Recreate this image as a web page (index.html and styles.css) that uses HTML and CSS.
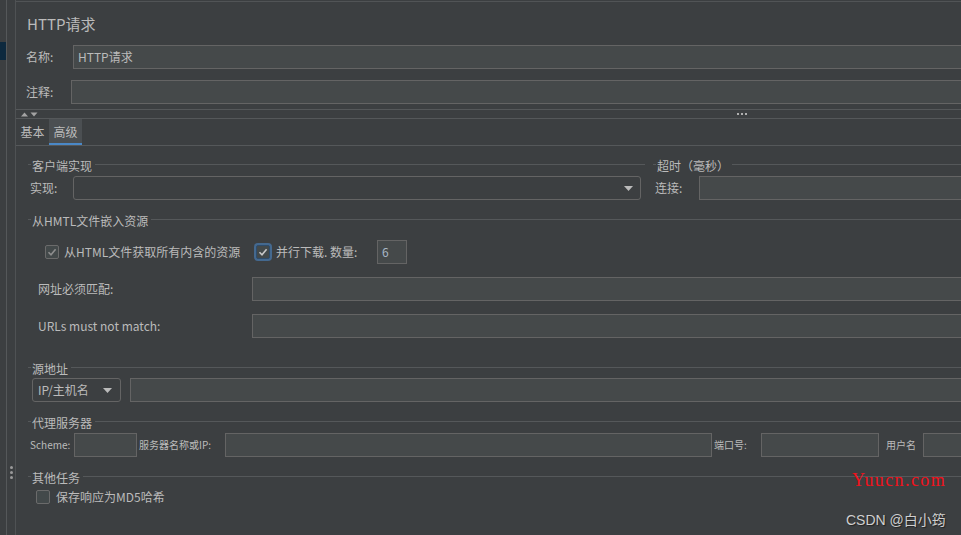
FILE: index.html
```html
<!DOCTYPE html>
<html lang="zh">
<head>
<meta charset="utf-8">
<title>HTTP请求</title>
<link rel="stylesheet" href="styles.css">
</head>
<body>
<div class="app">
  <div class="side">
    <div class="side-col"><div class="side-sel"></div></div>
    <div class="side-strip"><span class="grip"><i></i><i></i><i></i></span></div>
  </div>
  <div class="main">
    <div class="header">
      <div class="title">HTTP请求</div>
      <div class="hrow r-name"><span class="hlabel">名称:</span><div class="input">HTTP请求</div></div>
      <div class="hrow r-comment"><span class="hlabel">注释:</span><div class="input"></div></div>
    </div>
    <div class="splitter">
      <svg class="arrows" width="17" height="5" viewBox="0 0 17 5"><polygon points="0,4.5 3.5,0.5 7,4.5" fill="#a3a3a3"/><polygon points="9.5,0.5 16.5,0.5 13,4.5" fill="#a3a3a3"/></svg>
      <span class="sdots"><i></i><i></i><i></i></span>
    </div>
    <div class="tabs">
      <div class="tab">基本</div>
      <div class="tab active">高级</div>
    </div>
    <div class="content">
      <div class="sec1">
        <div class="col-left">
          <div class="legend"><span class="ltext">客户端实现</span></div>
          <div class="frow"><span class="flabel impl-label">实现:</span><div class="combo combo-impl"><svg width="9" height="5" viewBox="0 0 9 5"><polygon points="0,0 9,0 4.5,5" fill="#bbbbbb"/></svg></div></div>
        </div>
        <div class="col-right">
          <div class="legend full"><span class="ltext">超时（毫秒）</span></div>
          <div class="frow"><span class="flabel conn-label">连接:</span><div class="input"></div></div>
        </div>
      </div>

      <div class="legend full sp11"><span class="ltext">从HMTL文件嵌入资源</span></div>
      <div class="cbrow">
        <span class="cb cb-disabled"><svg width="12" height="12" viewBox="0 0 12 12"><path d="M2.5 6.2 L5 8.7 L9.6 3.2" fill="none" stroke="#8e8e8e" stroke-width="1.6"/></svg></span>
        <span class="cblabel1">从HTML文件获取所有内含的资源</span>
        <span class="cb cb-focus"><svg width="12" height="12" viewBox="0 0 12 12"><path d="M2.5 6.2 L5 8.7 L9.6 3.2" fill="none" stroke="#c8c8c8" stroke-width="1.6"/></svg></span>
        <span class="cblabel2">并行下载. 数量:</span>
        <div class="input num">6</div>
      </div>
      <div class="urow"><span class="ulabel">网址必须匹配:</span><div class="input"></div></div>
      <div class="urow"><span class="ulabel">URLs must not match:</span><div class="input"></div></div>

      <div class="legend full sp21"><span class="ltext">源地址</span></div>
      <div class="iprow">
        <div class="combo combo-ip"><span>IP/主机名</span><svg width="9" height="5" viewBox="0 0 9 5"><polygon points="0,0 9,0 4.5,5" fill="#bbbbbb"/></svg></div>
        <div class="input"></div>
      </div>

      <div class="legend full sp11"><span class="ltext">代理服务器</span></div>
      <div class="prow">
        <span class="pl pl-scheme">Scheme:</span><div class="input in-scheme"></div>
        <span class="pl pl-server">服务器名称或IP:</span><div class="input in-server"></div>
        <span class="pl pl-port">端口号:</span><div class="input in-port"></div>
        <span class="pl pl-user">用户名</span><div class="input"></div>
      </div>

      <div class="legend full sp11"><span class="ltext">其他任务</span></div>
      <div class="orow">
        <span class="cb"></span>
        <span class="olabel">保存响应为MD5哈希</span>
      </div>
    </div>
  </div>
  <div class="wm-yuucn">Yuucn.com</div>
  <div class="wm-csdn">CSDN @白小筠</div>
</div>
</body>
</html>
```

FILE: styles.css
```css
* { box-sizing: border-box; }
html, body { margin: 0; padding: 0; }
body {
  width: 961px;
  height: 535px;
  overflow: hidden;
  background: #3c3f41;
  color: #bbbbbb;
  font-family: "Noto Sans CJK SC", "Noto Sans", sans-serif;
  font-size: 12px;
  line-height: 16px;
}
.app { display: flex; height: 535px; position: relative; }

/* left side strip */
.side { display: flex; width: 16px; flex: none; }
.side-col { width: 7px; border-right: 1px solid #55585a; }
.side-sel { margin-top: 42px; height: 18px; background: #0d293e; }
.side-strip {
  width: 9px;
  border-right: 1px solid #4f5254;
  display: flex;
  flex-direction: column;
  align-items: center;
  padding-top: 466px;
}
.grip i { display: block; width: 3px; height: 3px; border-radius: 50%; background: #9a9a9a; margin-bottom: 2px; }

/* main */
.main { flex: 1; min-width: 0; overflow: hidden; margin-top: 1px; border-top: 1px solid #515456; }
.header { padding-left: 10px; }
.title { font-size: 15px; line-height: 22px; padding: 11px 0 0 1px; height: 33px; color: #bbbbbb; }
.hrow { display: flex; align-items: center; height: 24px; }
.r-name { margin-top: 10px; }
.r-comment { margin-top: 11px; }
.hlabel { flex: none; }
.r-name .hlabel { width: 47px; }
.r-comment .hlabel { width: 45px; }

.input {
  flex: 1;
  min-width: 0;
  height: 24px;
  background: #45494a;
  border: 1px solid #646464;
  padding: 0 4px;
  line-height: 22px;
  margin-right: -4px;
}

/* splitter */
.splitter {
  margin-top: 5px;
  height: 10px;
  border-top: 1px solid #55585a;
  border-bottom: 1px solid #55585a;
  display: flex;
  align-items: center;
  padding-left: 5px;
}
.arrows { display: block; flex: none; }
.sdots { display: flex; gap: 2px; margin-left: 699px; }
.sdots i { display: block; width: 2px; height: 2px; background: #b0b0b0; }

/* tabs */
.tabs { display: flex; height: 27px; border-bottom: 1px solid #55585a; }
.tab { width: 33px; height: 26px; padding-top: 3px; line-height: 20px; text-align: center; }
.tab.active { background: #4b4f52; border-bottom: 2px solid #4a88c7; }

/* content */
.content { padding: 10px 0 0 12px; }
.legend { display: flex; align-items: center; height: 17px; white-space: nowrap; }
.legend::before { content: ""; flex: none; width: 3px; height: 1px; background: #55585a; margin-right: 1px; }
.legend::after { content: ""; flex: 1; height: 1px; background: #55585a; margin-left: 3px; }
.legend.full::after { margin-right: -4px; }
.ltext { margin-top: 3px; }
.sp11 { margin-top: 11px; }
.sp21 { margin-top: 21px; }

.sec1 { display: flex; gap: 8px; }
.col-left { width: 617px; flex: none; }
.col-right { flex: 1; min-width: 0; }
.frow { display: flex; align-items: center; height: 24px; margin-top: 3px; }
.flabel { flex: none; padding-left: 2px; }
.impl-label { width: 45px; }
.conn-label { width: 46px; }

.combo {
  height: 24px;
  border: 1px solid #646464;
  border-radius: 3px;
  display: flex;
  align-items: center;
}
.combo svg { display: block; flex: none; }
.combo-impl { flex: 1; margin-right: 4px; justify-content: flex-end; padding-right: 7px; }

/* checkboxes */
.cbrow { display: flex; align-items: center; height: 24px; margin-top: 12px; padding-left: 17px; }
.cb {
  flex: none;
  width: 14px;
  height: 14px;
  border: 1px solid #6b6b6b;
  border-radius: 2px;
  background: #43494a;
  display: flex;
  align-items: center;
  justify-content: center;
}
.cb svg { display: block; }
.cb-focus { border-color: #2e4c6b; box-shadow: 0 0 0 2px #44698f; }
.cblabel1 { width: 192px; margin-left: 5px; flex: none; }
.cblabel2 { width: 101px; margin-left: 6px; flex: none; }
.input.num { flex: none; width: 30px; margin-right: 0; color: #a9b7c6; }

.urow { display: flex; align-items: center; height: 24px; margin-top: 13px; }
.ulabel { flex: none; width: 224px; padding-left: 10px; }

.iprow { display: flex; align-items: center; height: 24px; margin-top: 2px; }
.combo-ip { flex: none; width: 89px; margin-left: 4px; padding: 0 8px 0 5px; justify-content: space-between; }
.iprow .input { margin-left: 9px; }

.prow { display: flex; align-items: center; height: 24px; margin-top: 3px; font-size: 10px; }
.pl { flex: none; white-space: nowrap; }
.pl-scheme { width: 46px; padding-left: 2px; }
.in-scheme { flex: none; width: 63px; margin-right: 0; }
.pl-server { width: 88px; padding-left: 2px; }
.in-server { flex: none; width: 487px; margin-right: 0; }
.pl-port { width: 49px; padding-left: 2px; }
.in-port { flex: none; width: 118px; margin-right: 0; }
.pl-user { width: 44px; padding-left: 7px; }

.orow { display: flex; align-items: center; height: 14px; margin-top: 5px; padding-left: 8px; }
.olabel { margin-left: 6px; }

/* watermarks */
.wm-yuucn {
  position: absolute;
  left: 852px;
  top: 471px;
  font-family: "Liberation Serif", serif;
  font-size: 18px;
  line-height: 18px;
  letter-spacing: 1.4px;
  color: #f0121c;
}
.wm-csdn {
  position: absolute;
  left: 846px;
  top: 512px;
  font-family: "Liberation Sans", "Noto Sans CJK SC", sans-serif;
  font-size: 14px;
  line-height: 16px;
  color: #cfcfcf;
  text-shadow: 1px 1px 1px #222;
}
```
